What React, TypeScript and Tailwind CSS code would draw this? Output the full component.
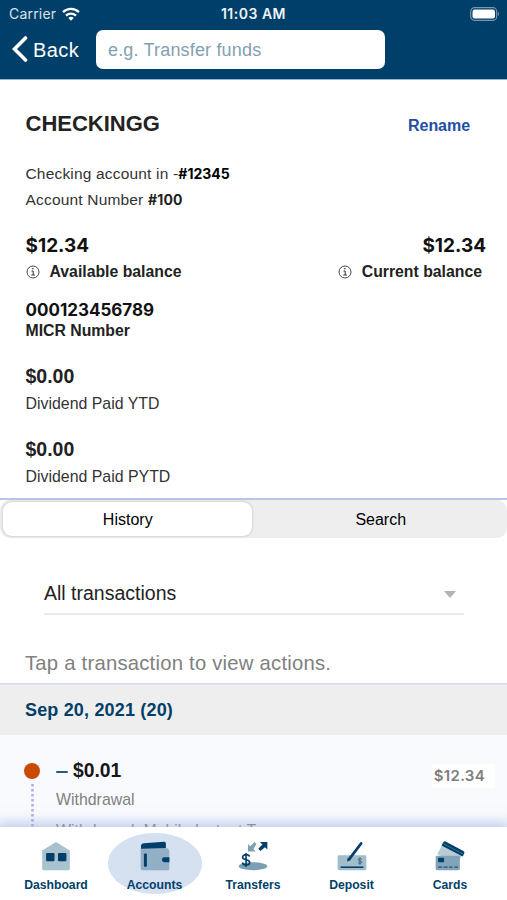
import React, { useState } from 'react';

const HomeIcon = () => (
  <svg className="w-[30px] h-[30px]" viewBox="0 0 30 30">
    <path d="M15 1 29 9.5V28a1.5 1.5 0 0 1-1.5 1.5h-25A1.5 1.5 0 0 1 1 28V9.5z" fill="#a9c2cf" />
    <rect x="5" y="12" width="8.5" height="8.5" rx="1" fill="#003f69" />
    <rect x="17" y="12" width="8.5" height="8.5" rx="1" fill="#003f69" />
  </svg>
);

const WalletIcon = () => (
  <svg className="w-[30px] h-[30px]" viewBox="0 0 30 30">
    <path d="M.5 7h25a4 4 0 0 1 4 4v17a1.5 1.5 0 0 1-1.5 1.5H2A1.5 1.5 0 0 1 .5 28z" fill="#92b0c5" />
    <path d="M.8 5.500Q.8 2.500 4 2.300L24 .8q2-.2 2 1.800v4.500L1 7.800z" fill="#003f69" />
    <rect x="3.800" y="12.500" width="3" height="13.500" rx="1" fill="#003f69" />
    <path d="M29.500 16.500h-5a2.500 2.500 0 0 0 0 5h5z" fill="#003f69" />
  </svg>
);

const TransfersIcon = () => (
  <svg className="w-[30px] h-[30px]" viewBox="0 0 30 30">
    <ellipse cx="15" cy="25.500" rx="14.500" ry="4" fill="#7d9fb4" />
    <path d="M18.500 3 16.500 1l-4.200 4.200L10 3v7.500h7.800L15.500 8z" fill="#7d9fb4" />
    <path d="M22 1h7.500v7.500l-2.400-2.300L22.500 10l-2.200-2.200L24.600 3.500z" fill="#003f69" />
    <path d="M8 12v14M11.500 15.800c-.4-1.500-1.800-2-3.500-2-2 0-3.500.9-3.500 2.500 0 3.700 7.200 1.600 7.200 5.400 0 1.700-1.700 2.500-3.700 2.500s-3.500-.9-3.800-2.500" fill="none" stroke="#003f69" strokeWidth="1.600" />
  </svg>
);

const DepositIcon = () => (
  <svg className="w-[30px] h-[30px]" viewBox="0 0 30 30">
    <rect x=".5" y="14.500" width="29" height="15" rx="1.500" fill="#a1bccb" />
    <path d="M3.500 26.500h23" stroke="#003f69" strokeWidth="1.600" />
    <path d="M24.200 2.500 12 18.500" stroke="#003f69" strokeWidth="2.800" strokeLinecap="round" />
    <path d="m10 21 .8-4 2.500 2z" fill="#003f69" />
    <path d="M23 16.500v7.500M24.800 18.500c-.8-1.200-3.500-1-3.500.4 0 1.700 3.600.8 3.600 2.600 0 1.500-3 1.600-3.700.2" fill="none" stroke="#2c5f80" strokeWidth=".9" />
  </svg>
);

const CardsIcon = () => (
  <svg className="w-[30px] h-[30px]" viewBox="0 0 30 30">
    <path d="M8.500 1.500 28 12.500l-4.500 9L3 14q-.8-1 0-2.500z" fill="#b7ccd5" />
    <path d="M8.500.7q.8-.8 2-.2L28.500 10q1.500 1 .8 2.500l-1.500 3.200L6.500 4.500z" fill="#003f69" />
    <path d="m8 2.500 20.500 10.800" stroke="#477791" strokeWidth=".9" />
    <rect x=".5" y="15" width="24.500" height="14.500" rx="1.500" fill="#81a4b9" />
    <rect x="3" y="17" width="6" height="4.500" rx=".8" fill="#003f69" />
    <path d="M3 26.300h4M8.500 26.300h4M14 26.300h3.500M19.500 26.300h3.500" stroke="#1c5578" strokeWidth="1.300" />
  </svg>
);

const InfoIcon = () => (
  <svg className="w-[14px] h-[14px] shrink-0" viewBox="0 0 14 14" fill="none" stroke="#333">
    <circle cx="7" cy="7" r="6" strokeWidth=".9" />
    <path d="M5.500 6H7.200v4M5.300 10h3.600" strokeWidth="1" />
    <circle cx="6.900" cy="3.800" r=".8" fill="#333" stroke="none" />
  </svg>
);

const tabs = [
  { name: 'Dashboard', icon: HomeIcon },
  { name: 'Accounts', icon: WalletIcon },
  { name: 'Transfers', icon: TransfersIcon },
  { name: 'Deposit', icon: DepositIcon },
  { name: 'Cards', icon: CardsIcon },
];

export default function App() {
  const [activeTab, setActiveTab] = useState('Accounts');
  const [view, setView] = useState('History');

  return (
    <div className="flex flex-col w-[507px] h-[900px] overflow-hidden bg-white text-[#222] font-['Liberation_Sans',Arial,sans-serif] whitespace-nowrap">
      {/* Status bar + search */}
      <header className="h-[80px] shrink-0 bg-[#003f69] border-b border-[#8fb8d2] text-white">
        <div className="grid grid-cols-3 items-center h-[27px] pl-[9px] pr-[7px] font-['Inter',sans-serif] text-[14px]">
          <div className="flex items-center gap-[6px] text-[#d9e3ea]">
            <span className="tracking-[0.2px]">Carrier</span>
            <svg className="w-[18px] h-[14px]" viewBox="0 0 18 14" fill="none" stroke="#fff" strokeWidth="2.300">
              <path d="M1 5.200a11.500 11.500 0 0 1 16 0" />
              <path d="M4 8.600a7.200 7.200 0 0 1 10 0" />
              <path d="M9 13.700 6.300 11a3.800 3.800 0 0 1 5.400 0z" fill="#fff" stroke="none" />
            </svg>
          </div>
          <span className="text-center font-semibold text-[#edf3f6] tracking-[0.5px] -ml-[2px]">11:03 AM</span>
          <svg className="w-[30px] h-[14px] justify-self-end" viewBox="0 0 30 14">
            <rect x=".7" y=".7" width="26" height="12.600" rx="3.800" fill="none" stroke="#7898ad" strokeWidth="1.200" />
            <rect x="2.500" y="2.500" width="22.500" height="9" rx="2.200" fill="#fff" />
            <path d="M28 4.800q2 2.200 0 4.400z" fill="#7898ad" />
          </svg>
        </div>
        <div className="flex items-center h-[45px] pl-[12px]">
          <button className="flex items-center w-[84px] text-[20px] tracking-[0.4px]">
            <svg className="w-[16px] h-[26px] mr-[5px] -mt-[2px]" viewBox="0 0 16 26" fill="none" stroke="#fff" strokeWidth="3.600" strokeLinecap="round">
              <path d="M13.500 2 2.500 13l11 11" />
            </svg>
            Back
          </button>
          <input
            className="w-[289px] h-[39px] rounded-[7px] bg-white px-[12px] pt-[2px] text-[18px] tracking-[0.17px] text-black outline-none placeholder:text-[#839fb2]"
            placeholder="e.g. Transfer funds"
          />
        </div>
      </header>

      {/* Account details */}
      <section className="h-[420px] shrink-0 pt-[29px] pl-[25.500px] pr-[21px] border-b-2 border-[#b7c6e0]">
        <div className="flex items-center justify-between h-[28px] pr-[16px]">
          <h1 className="text-[22px] font-bold">CHECKINGG</h1>
          <button className="text-[16px] tracking-[-0.05px] font-bold text-[#244da5] pt-[5px]">Rename</button>
        </div>
        <p className="mt-[24px] h-[26px] leading-[26px] text-[15.500px] tracking-[0.18px] text-[#333]">
          Checking account in -<b className="font-['Inter',sans-serif] text-[14px] tracking-normal text-black">#12345</b>
        </p>
        <p className="h-[25px] leading-[25px] text-[15.500px] tracking-[0.18px] text-[#333]">
          Account Number <b className="font-['Inter',sans-serif] text-[14px] text-[#222]">#100</b>
        </p>

        <div className="mt-[21px] flex justify-between h-[25px] leading-[25px] font-['Inter',sans-serif] text-[19px] font-bold text-[#111]">
          <span>$12.34</span>
          <span>$12.34</span>
        </div>
        <div className="flex justify-between h-[27px] pr-[4px] text-[15.800px] font-bold">
          <span className="flex items-center gap-[10px]"><InfoIcon />Available balance</span>
          <span className="flex items-center gap-[10px]"><InfoIcon />Current balance</span>
        </div>

        <p className="mt-[14px] h-[22px] leading-[22px] text-[17px] font-['Inter',sans-serif] font-bold text-[#111]">000123456789</p>
        <p className="h-[19px] leading-[19px] text-[15.800px] font-bold">MICR Number</p>

        <p className="mt-[24px] h-[24px] leading-[24px] text-[19.500px] font-bold">$0.00</p>
        <p className="mt-[3px] h-[26px] leading-[26px] text-[15.900px] text-[#333]">Dividend Paid YTD</p>
        <p className="mt-[20px] h-[24px] leading-[24px] text-[19.500px] font-bold">$0.00</p>
        <p className="mt-[3px] h-[26px] leading-[26px] text-[15.900px] text-[#333]">Dividend Paid PYTD</p>
      </section>

      {/* Segmented control */}
      <div className="grid grid-cols-2 h-[38px] shrink-0 p-[2px] rounded-[10px] bg-[#eee] text-[16px] text-black">
        {['History', 'Search'].map(name => (
          <button
            key={name}
            onClick={() => setView(name)}
            className={view === name ? 'ml-px mr-[2px] pt-[2px] pl-px rounded-[9px] bg-white shadow-[0_0_3px_rgba(0,0,0,0.22)]' : 'ml-[3px] pt-[2px]'}
          >
            {name}
          </button>
        ))}
      </div>

      <div className="h-[145px] shrink-0 pt-[36px]">
        <div className="flex items-center justify-between w-[420px] h-[41px] ml-[44px] pr-[8px] pt-px border-b-2 border-[#e8eaed] text-[19.500px]">
          All transactions
          <svg className="w-[12px] h-[7px]" viewBox="0 0 12 7"><path d="M0 0h12L6 7z" fill="#b3b3b3" /></svg>
        </div>
        <p className="mt-[35px] pl-[25px] h-[26px] leading-[26px] text-[20.300px] tracking-[0.22px] text-[#808080]">Tap a transaction to view actions.</p>
      </div>

      <div className="h-[52px] shrink-0 flex items-center pl-[25px] border-t-2 border-[#dbe0ed] bg-[#eee] text-[18px] tracking-[0.17px] font-bold text-[#003f69]">
        Sep 20, 2021 (20)
      </div>

      {/* Transactions */}
      <div className="flex h-[92px] shrink-0 overflow-hidden bg-[#f9fafd] pt-[23px] pl-[24px] pr-[12px]">
        <div className="flex flex-col items-center w-[16px] pt-[5px] shrink-0">
          <span className="w-[16px] h-[16px] rounded-full bg-[#c94a00] shrink-0" />
          <svg className="w-[3px] h-[60px] mt-[5px] shrink-0" viewBox="0 0 3 60">
            <path d="M1.500 0v60" stroke="#a9b3e4" strokeWidth="2.600" strokeDasharray="2.500 2.500" />
          </svg>
        </div>
        <div className="pl-[16px] grow">
          <p className="flex items-center h-[27px] text-[19.300px] font-bold text-[#171717]">
            <span className="w-[12px] h-[2px] rounded-full bg-[#235b87] mr-[5px]" />
            $0.01
          </p>
          <p className="mt-[2px] h-[26px] leading-[26px] text-[15.900px] text-[#808080]">Withdrawal</p>
          <p className="mt-[5px] h-[26px] leading-[26px] text-[15.900px] text-[#808080]">Withdrawal, Mobile Instant T</p>
        </div>
        <span className="self-start mt-[6px] h-[24px] leading-[24px] bg-white pr-[10px] pl-[2px] font-['Inter',sans-serif] text-[15px] tracking-[0.3px] font-semibold text-[#7d7d7d]">
          $12.34
        </span>
      </div>

      <nav className="relative grid grid-cols-[98px_99px_98px_99px_98px] h-[73px] shrink-0 bg-white pl-[7px] pt-[6px] shadow-[0_-1px_12px_3px_rgba(150,178,225,0.65)]">
        {tabs.map(({ name, icon: Icon }) => (
          <button
            key={name}
            onClick={() => setActiveTab(name)}
            className={
              activeTab === name
                ? 'w-[94px] h-[61px] mx-auto rounded-[50%] bg-[#d5e0f1] flex flex-col items-center pt-[8px] text-[12.200px] font-bold text-[#003f69]'
                : 'flex flex-col items-center h-[61px] pt-[8px] text-[12.200px] font-bold text-[#003f69]'
            }
          >
            <Icon />
            <span className="mt-[5px]">{name}</span>
          </button>
        ))}
      </nav>
    </div>
  );
}
